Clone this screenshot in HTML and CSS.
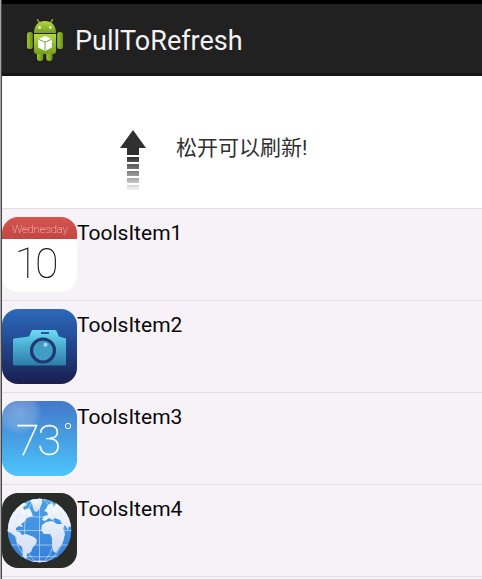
FILE: index.html
```html
<!DOCTYPE html>
<html lang="zh-CN">
<head>
<meta charset="utf-8">
<title>PullToRefresh</title>
<link rel="stylesheet" href="styles.css">
</head>
<body>
<div class="screen">
  <header class="bar">
    <svg class="robot" viewBox="0 0 36 44" aria-hidden="true">
      <defs>
        <linearGradient id="green" x1="0" y1="0" x2="0" y2="1"><stop offset="0" stop-color="#b2d843"/><stop offset="1" stop-color="#789f1e"/></linearGradient>
        <linearGradient id="limb" x1="0" y1="0" x2="1" y2="0"><stop offset="0" stop-color="#9cc433"/><stop offset="1" stop-color="#6b9018"/></linearGradient>
      </defs>
      <path d="M12.500 4 10.500.6M23.500 4l2-3.400" stroke="#94b632" stroke-width="1.400" stroke-linecap="round"/>
      <path d="M7 14C7 6 11.500 2 18 2S29 6 29 14z" fill="url(#green)"/>
      <circle cx="12.600" cy="8.500" r="1.300" fill="#fff"/><circle cx="23.300" cy="8.500" r="1.300" fill="#fff"/>
      <rect x="0" y="13" width="5.800" height="17" rx="2.500" fill="url(#limb)"/>
      <rect x="30.200" y="13" width="5.800" height="17" rx="2.500" fill="url(#limb)"/>
      <rect x="10" y="30" width="6.200" height="12" rx="2.900" fill="url(#limb)"/>
      <rect x="19.300" y="30" width="6.200" height="12" rx="2.900" fill="url(#limb)"/>
      <path d="M7 15h22V32a3 3 0 0 1-3 3H10a3 3 0 0 1-3-3z" fill="url(#green)"/>
      <path d="m18 17 6.800 3v8.500L18 32l-6.800-3.500V20z" fill="#fff"/>
      <path d="m11.500 20.200 6.500 3 6.500-3M18 23.200V31.500" fill="none" stroke="#7c9c3c" stroke-width="1"/>
    </svg>
    <h1 class="title">PullToRefresh</h1>
  </header>

  <section class="refresh">
    <svg class="arrow" viewBox="0 0 26 61" aria-hidden="true">
      <defs>
        <linearGradient id="fade" gradientUnits="userSpaceOnUse" x1="0" y1="27" x2="0" y2="61"><stop offset="0" stop-color="#353535"/><stop offset=".45" stop-color="#858585"/><stop offset="1" stop-color="#fcfafa"/></linearGradient>
      </defs>
      <path d="M13 0 26 18h-7v7H7v-7H0z" fill="#303030"/>
      <path d="M7 27h12v5H7zM7 34h12v5H7zM7 41h12v5H7zM7 48h12v5H7zM7 55h12v5H7z" fill="url(#fade)"/>
    </svg>
    <p class="hint">松开可以刷新!</p>
  </section>

  <ul class="list">
    <li class="row">
      <svg class="icon" viewBox="0 0 75 75">
        <defs><linearGradient id="red" x1="0" y1="0" x2="0" y2="1"><stop offset="0" stop-color="#d45450"/><stop offset="1" stop-color="#c54541"/></linearGradient></defs>
        <rect width="75" height="75" fill="#fff"/>
        <rect width="75" height="22" fill="url(#red)"/>
        <text class="thin" x="10" y="16" font-size="11.500" textLength="56" fill="#ffe4e2">Wednesday</text>
        <text class="thin" x="12.500" y="61" font-size="43" textLength="44" fill="#111">10</text>
      </svg>
      <span class="label">ToolsItem1</span>
    </li>
    <li class="row">
      <svg class="icon" viewBox="0 0 75 75">
        <defs>
          <linearGradient id="navy" x1="0" y1="0" x2="0" y2="1"><stop offset="0" stop-color="#2c69b8"/><stop offset=".35" stop-color="#25509c"/><stop offset="1" stop-color="#191e4e"/></linearGradient>
          <linearGradient id="body" x1="0" y1="0" x2="0" y2="1"><stop offset="0" stop-color="#6bdcf5"/><stop offset=".4" stop-color="#4fb3d5"/><stop offset="1" stop-color="#2c7ca7"/></linearGradient>
        </defs>
        <rect width="75" height="75" fill="url(#navy)"/>
        <path d="M12 29.500 27 27.500 29.500 22q.5-1 2-1h21q1.500 0 2 1L57 27.500l7 2V55q0 1.500-1.500 1.500h-50Q11 56.500 11 55V31q0-1.500 1-1.500z" fill="url(#body)"/>
        <rect x="39" y="23" width="8" height="2" fill="#25549b"/>
        <circle cx="41" cy="41.500" r="11.500" fill="#409dc3" stroke="#203976" stroke-width="3.200"/>
        <circle cx="43.500" cy="35.700" r="2" fill="#a6d9ec"/>
      </svg>
      <span class="label">ToolsItem2</span>
    </li>
    <li class="row">
      <svg class="icon" viewBox="0 0 75 75">
        <defs>
          <linearGradient id="sky" x1="0" y1="0" x2="0" y2="1"><stop offset="0" stop-color="#4378ca"/><stop offset="1" stop-color="#4bc5fc"/></linearGradient>
          <radialGradient id="glow"><stop offset="0" stop-color="#fff" stop-opacity=".28"/><stop offset=".7" stop-color="#fff" stop-opacity=".16"/><stop offset="1" stop-color="#fff" stop-opacity="0"/></radialGradient>
        </defs>
        <rect width="75" height="75" fill="url(#sky)"/>
        <circle cx="17" cy="11" r="23" fill="url(#glow)"/>
        <text class="thin bright" x="14" y="54" font-size="43" textLength="45" fill="#fff">73</text>
        <circle cx="66" cy="25" r="2.700" fill="none" stroke="#fff"/>
      </svg>
      <span class="label">ToolsItem3</span>
    </li>
    <li class="row">
      <svg class="icon" viewBox="0 0 75 75">
        <defs>
          <linearGradient id="sea" x1="0" y1="0" x2="0" y2="1"><stop offset="0" stop-color="#4da6e8"/><stop offset="1" stop-color="#347bd8"/></linearGradient>
          <linearGradient id="land" x1="0" y1="0" x2="0" y2="1"><stop offset="0" stop-color="#fafafd"/><stop offset="1" stop-color="#d0dcf2"/></linearGradient>
          <clipPath id="disc"><circle cx="37.500" cy="37.500" r="31.800"/></clipPath>
        </defs>
        <rect width="75" height="75" fill="#292c29"/>
        <g clip-path="url(#disc)">
          <rect width="75" height="75" fill="url(#sea)"/>
          <path fill="url(#land)" d="M4 32V20L17 9l6 1 2 2-4 2 1 3 5-2 2 3 2 5-6 2-3 4-3 2 2 3-4-1-3 2v3l4 1 2 3 4-1 8 3 3 3-1 4-3 3-2 5-4 2-1 6-3-4-1-9-5-4-1-6-5-4-7-3z"/>
          <path fill="url(#land)" d="M27 5h13v5l-2 5-3 4-3-1-2-7z"/>
          <path fill="url(#land)" d="m42 18 2-2 2-4 4-2 2 4 3-6 9 6 6 14v7l-3-2-1 4-3-5-2 3 2 6-2 8-4 6-3 5-3-2-1-7v-6l-2-4h-6l-3-4 1-5 4-3 6-1 5 3h5l-2-4-5-2-3 2-3-2-4 3-3-1 2-4 4-1-1-3z"/>
          <path fill="#dbe5f6" d="M24 69q14-3 27 0l-4 4H28z"/>
          <g fill="none" stroke="#d6eaff" stroke-opacity=".6" stroke-width="1">
            <path d="M37.500 5v65M5 37.500h65M12 22q25 4 51 0M8 52h59M16 63q21 2 43 0"/>
            <ellipse cx="37.500" cy="37.500" rx="15" ry="32"/><ellipse cx="37.500" cy="37.500" rx="24.500" ry="32"/>
          </g>
        </g>
      </svg>
      <span class="label">ToolsItem4</span>
    </li>
  </ul>
</div>
</body>
</html>
```
FILE: styles.css
```css
* { box-sizing: border-box; }
body {
  margin: 0;
  background: #f6f2f7;
  font-family: Roboto, "Noto Sans CJK SC", sans-serif;
  overflow: hidden;
}
.screen {
  height: 579px;
  border-left: 1px solid #454548;
  margin-left: 1px;
  box-shadow: -1px 0 #a5a5a5;
  overflow: hidden;
}
.bar {
  display: flex;
  align-items: flex-start;
  height: 76px;
  padding: 18px 0 0 25px;
  border-top: 4px solid #000;
  border-bottom: 3px solid #171516;
  background: #212121;
}
.robot { width: 36px; height: 44px; margin-top: -3px; }
.title {
  margin: 3px 0 0 12px;
  color: #f5f2f3;
  font-size: 27px;
  font-weight: 400;
  line-height: 32px;
}
.refresh {
  display: flex;
  align-items: flex-start;
  height: 132px;
  padding: 54px 0 0 118px;
  background: #fff;
}
.arrow { width: 26px; height: 61px; }
.hint {
  margin: 3px 0 0 30px;
  color: #303030;
  font-size: 21px;
  line-height: 30px;
}
.list { margin: 0; padding: 0; list-style: none; }
.row {
  display: flex;
  align-items: flex-start;
  height: 92px;
  padding-top: 8px;
  border-top: 1px solid #e2dfe3;
}
.row:last-child { height: 93px; border-bottom: 1px solid #e2dfe3; }
.icon { width: 75px; height: 75px; border-radius: 16px; will-change: transform; }
.label {
  margin-top: 4px;
  color: #080808;
  font-size: 21px;
  line-height: 25px;
}
.thin { font-family: Roboto, sans-serif; font-weight: 100; }
.bright { stroke: #fff; stroke-width: .4px; }
```
